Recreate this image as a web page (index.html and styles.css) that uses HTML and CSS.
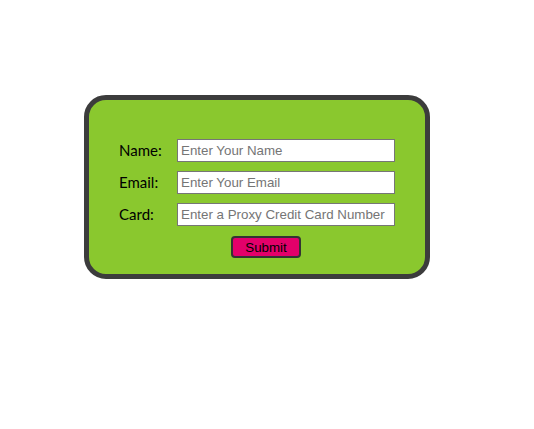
FILE: index.html
```html
<!DOCTYPE html>
<html>
<head>
<meta charset="utf-8">
<link rel="stylesheet" href="styles.css">
</head>
<body>
<form class="card">
  <div class="fields">
    <label class="label" for="name">Name:</label>
    <input class="field" id="name" type="text" placeholder="Enter Your Name">
    <label class="label" for="email">Email:</label>
    <input class="field" id="email" type="text" placeholder="Enter Your Email">
    <label class="label" for="card">Card:</label>
    <input class="field" id="card" type="text" placeholder="Enter a Proxy Credit Card Number">
  </div>
  <div class="actions">
    <button class="submit" type="button">Submit</button>
  </div>
</form>
</body>
</html>
```
FILE: styles.css
```css
html, body {
  margin: 0;
  background: #ffffff;
}
body {
  padding: 95px 0 0 84px;
}
.card {
  box-sizing: border-box;
  width: 346px;
  height: 184px;
  background: #8ac82e;
  border: 5px solid #3c3c3c;
  border-radius: 22px;
  padding: 39px 30px 0 30px;
}
.fields {
  display: grid;
  grid-template-columns: 58px 218px;
  row-gap: 9px;
  align-items: center;
}
.label {
  font-family: Lato, "Open Sans", sans-serif;
  font-size: 15px;
  color: #000;
  padding-bottom: 2px;
}
.field {
  box-sizing: border-box;
  height: 23px;
  width: 218px;
  margin: 0;
  border: 1px solid #767676;
  background: #fff;
  padding: 0 3px;
  font-family: "Liberation Sans", Arial, sans-serif;
  font-size: 13.333px;
  color: #000;
  outline: none;
}
.field::placeholder {
  color: #757575;
}
.actions {
  display: flex;
  padding-left: 112px;
  margin-top: 10px;
}
.submit {
  box-sizing: border-box;
  width: 70px;
  height: 22px;
  margin: 0;
  padding: 0;
  background: #e3006a;
  border: 2px solid #333;
  border-radius: 4px;
  font-family: "Liberation Sans", Arial, sans-serif;
  font-size: 13.333px;
  color: #000;
}
```
